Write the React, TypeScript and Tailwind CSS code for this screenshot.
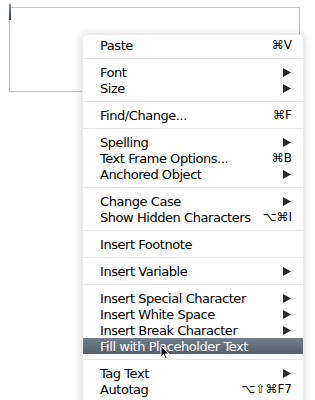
type Item = { label: string; right?: string; sub?: boolean; active?: boolean };

const groups: Item[][] = [
  [{ label: "Paste", right: "⌘V" }],
  [
    { label: "Font", sub: true },
    { label: "Size", sub: true },
  ],
  [{ label: "Find/Change...", right: "⌘F" }],
  [
    { label: "Spelling", sub: true },
    { label: "Text Frame Options...", right: "⌘B" },
    { label: "Anchored Object", sub: true },
  ],
  [
    { label: "Change Case", sub: true },
    { label: "Show Hidden Characters", right: "⌥⌘I" },
  ],
  [{ label: "Insert Footnote" }],
  [{ label: "Insert Variable", sub: true }],
  [
    { label: "Insert Special Character", sub: true },
    { label: "Insert White Space", sub: true },
    { label: "Insert Break Character", sub: true },
    { label: "Fill with Placeholder Text", active: true },
  ],
  [
    { label: "Tag Text", sub: true },
    { label: "Autotag", right: "⌥⇧⌘F7" },
  ],
];

function Row({ item }: { item: Item }) {
  return (
    <div
      className={`h-4 flex items-center justify-between pl-[17px] pr-[11px] leading-none whitespace-nowrap ${
        item.active ? "bg-gradient-to-b from-[#737f8c] to-[#56606b] text-white" : "text-black"
      }`}
    >
      <span>{item.label}</span>
      {item.right && <span className="text-[12px] tracking-normal">{item.right}</span>}
      {item.sub && (
        <svg width="8" height="9" viewBox="0 0 8 9" className="mr-[1px]">
          <path d="M0 0 L8 4.5 L0 9 Z" fill="#2b2b2b" />
        </svg>
      )}
    </div>
  );
}

export default function App() {
  return (
    <div
      className="relative w-[315px] h-[400px] bg-white overflow-hidden"
      style={{ fontFamily: '"DejaVu Sans", sans-serif' }}
    >
      {/* text frame on the page */}
      <div className="absolute left-[9px] top-[7px] w-[291px] h-[85px] border border-[#a9c7f4]" />
      <div className="absolute left-[9px] top-[4px] w-[2px] h-[16px] bg-gradient-to-b from-[#8a8f96] to-[#203a66]" />

      {/* context menu */}
      <div className="absolute left-[82px] top-[34px] w-[222px] h-[380px] bg-white/[0.97] rounded-t-[5px] border border-[#ececec] shadow-[0_1px_8px_rgba(0,0,0,0.2)] pt-[2px] text-[13px] tracking-[-0.45px]">
        {groups.map((g, i) => (
          <div key={i}>
            {i > 0 && (
              <div className="h-[11px] flex items-center">
                <div className="h-px w-full bg-[#e8e8e8]" />
              </div>
            )}
            {g.map((item) => (
              <Row key={item.label} item={item} />
            ))}
          </div>
        ))}
      </div>

      {/* mouse pointer */}
      <svg className="absolute left-[160px] top-[345px]" width="10" height="15" viewBox="0 0 10 15">
        <path d="M1 1 L1 12 L3.6 9.6 L5.4 13.6 L7 12.9 L5.3 9 L8.8 9 Z" fill="#000" stroke="#fff" strokeWidth="1" />
      </svg>
    </div>
  );
}
